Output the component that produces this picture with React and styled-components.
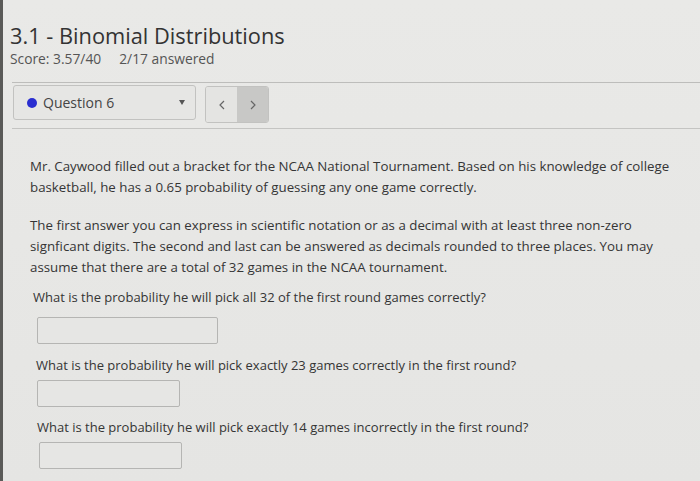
import React from "react";
import styled, { createGlobalStyle } from "styled-components";

const Global = createGlobalStyle`
  html, body { margin: 0; padding: 0; }
  body {
    background: #e7e7e5;
    font-family: "Open Sans", "Liberation Sans", sans-serif;
    color: #3a3a3a;
  }
`;

const Page = styled.div`
  width: 700px;
  height: 481px;
  box-sizing: border-box;
  border-left: 3px solid #5a5a58;
  background: linear-gradient(180deg, #e9e9e7 0%, #e5e5e3 100%);
  overflow: hidden;
`;

const Header = styled.div`
  padding: 21px 0 0 7px;
`;

const Title = styled.h1`
  margin: 0;
  font-size: 21.8px;
  font-weight: 400;
  color: #333;
  line-height: 29px;
`;

const Meta = styled.div`
  display: flex;
  gap: 18px;
  font-size: 13.8px;
  color: #555;
  line-height: 18px;
`;

const NavBar = styled.div`
  margin: 14px 0 0 9px;
  border-top: 1px solid #bdbdbb;
  border-bottom: 1px solid #c4c4c2;
  padding: 2px 0 5px 1px;
  display: flex;
  align-items: flex-start;
  gap: 9px;
`;

const Select = styled.div`
  width: 183px;
  height: 35px;
  box-sizing: border-box;
  border: 1px solid #c2c2c0;
  border-radius: 3px;
  background: #e6e6e4;
  display: flex;
  align-items: center;
  padding: 0 10px 0 13px;
  font-size: 14px;
  color: #444;
`;

const Dot = styled.span`
  width: 10px;
  height: 10px;
  border-radius: 50%;
  background: #2a2ed0;
  margin-right: 6px;
`;

const Caret = styled.span`
  margin-left: auto;
  width: 0;
  height: 0;
  border-left: 3.5px solid transparent;
  border-right: 3.5px solid transparent;
  border-top: 5px solid #555;
`;

const Pager = styled.div`
  display: flex;
  height: 37px;
  margin-top: 1px;
  box-sizing: border-box;
  border: 1px solid #c2c2c0;
  border-radius: 3px;
  overflow: hidden;
`;

const PageBtn = styled.div`
  width: 31px;
  display: flex;
  align-items: center;
  justify-content: center;
  background: ${(p) => (p.$active ? "#c8c8c6" : "#e4e4e2")};
  color: #666;
`;

const Chevron = ({ dir }) => (
  <svg width="6" height="10" viewBox="0 0 6 10" fill="none" stroke="#666" strokeWidth="1.2">
    {dir === "left" ? <path d="M5 1 L1 5 L5 9" /> : <path d="M1 1 L5 5 L1 9" />}
  </svg>
);

const Body = styled.div`
  padding: 27px 20px 0 27px;
  font-size: 13.3px;
  line-height: 21px;
  color: #353535;
`;

const Para = styled.p`
  margin: 0 0 ${(p) => p.$bottom || 17}px 0;
`;

const Question = styled.p`
  margin: 0;
  font-size: 13px;
  padding-left: ${(p) => p.$indent || 0}px;
`;

const Answer = styled.div`
  width: ${(p) => p.$w}px;
  height: 27px;
  box-sizing: border-box;
  border: 1px solid #b5b5b3;
  border-radius: 2px;
  background: #e6e6e4;
  margin: ${(p) => p.$top}px 0 ${(p) => p.$bottom}px ${(p) => p.$left}px;
`;

export default function App() {
  return (
    <>
      <Global />
      <Page>
        <Header>
          <Title>3.1 - Binomial Distributions</Title>
          <Meta>
            <span>Score: 3.57/40</span>
            <span>2/17 answered</span>
          </Meta>
        </Header>
        <NavBar>
          <Select>
            <Dot />
            Question 6
            <Caret />
          </Select>
          <Pager>
            <PageBtn>
              <Chevron dir="left" />
            </PageBtn>
            <PageBtn $active>
              <Chevron dir="right" />
            </PageBtn>
          </Pager>
        </NavBar>
        <Body>
          <Para>
            Mr. Caywood filled out a bracket for the NCAA National Tournament. Based on his knowledge of college
            basketball, he has a 0.65 probability of guessing any one game correctly.
          </Para>
          <Para $bottom={9}>
            The first answer you can express in scientific notation or as a decimal with at least three non-zero
            signficant digits. The second and last can be answered as decimals rounded to three places. You may
            assume that there are a total of 32 games in the NCAA tournament.
          </Para>
          <Question $indent={3}>What is the probability he will pick all 32 of the first round games correctly?</Question>
          <Answer $w={181} $top={9} $bottom={11} $left={7} />
          <Question $indent={6}>What is the probability he will pick exactly 23 games correctly in the first round?</Question>
          <Answer $w={143} $top={4} $bottom={10} $left={7} />
          <Question $indent={7}>What is the probability he will pick exactly 14 games incorrectly in the first round?</Question>
          <Answer $w={143} $top={4} $bottom={0} $left={9} />
        </Body>
      </Page>
    </>
  );
}
